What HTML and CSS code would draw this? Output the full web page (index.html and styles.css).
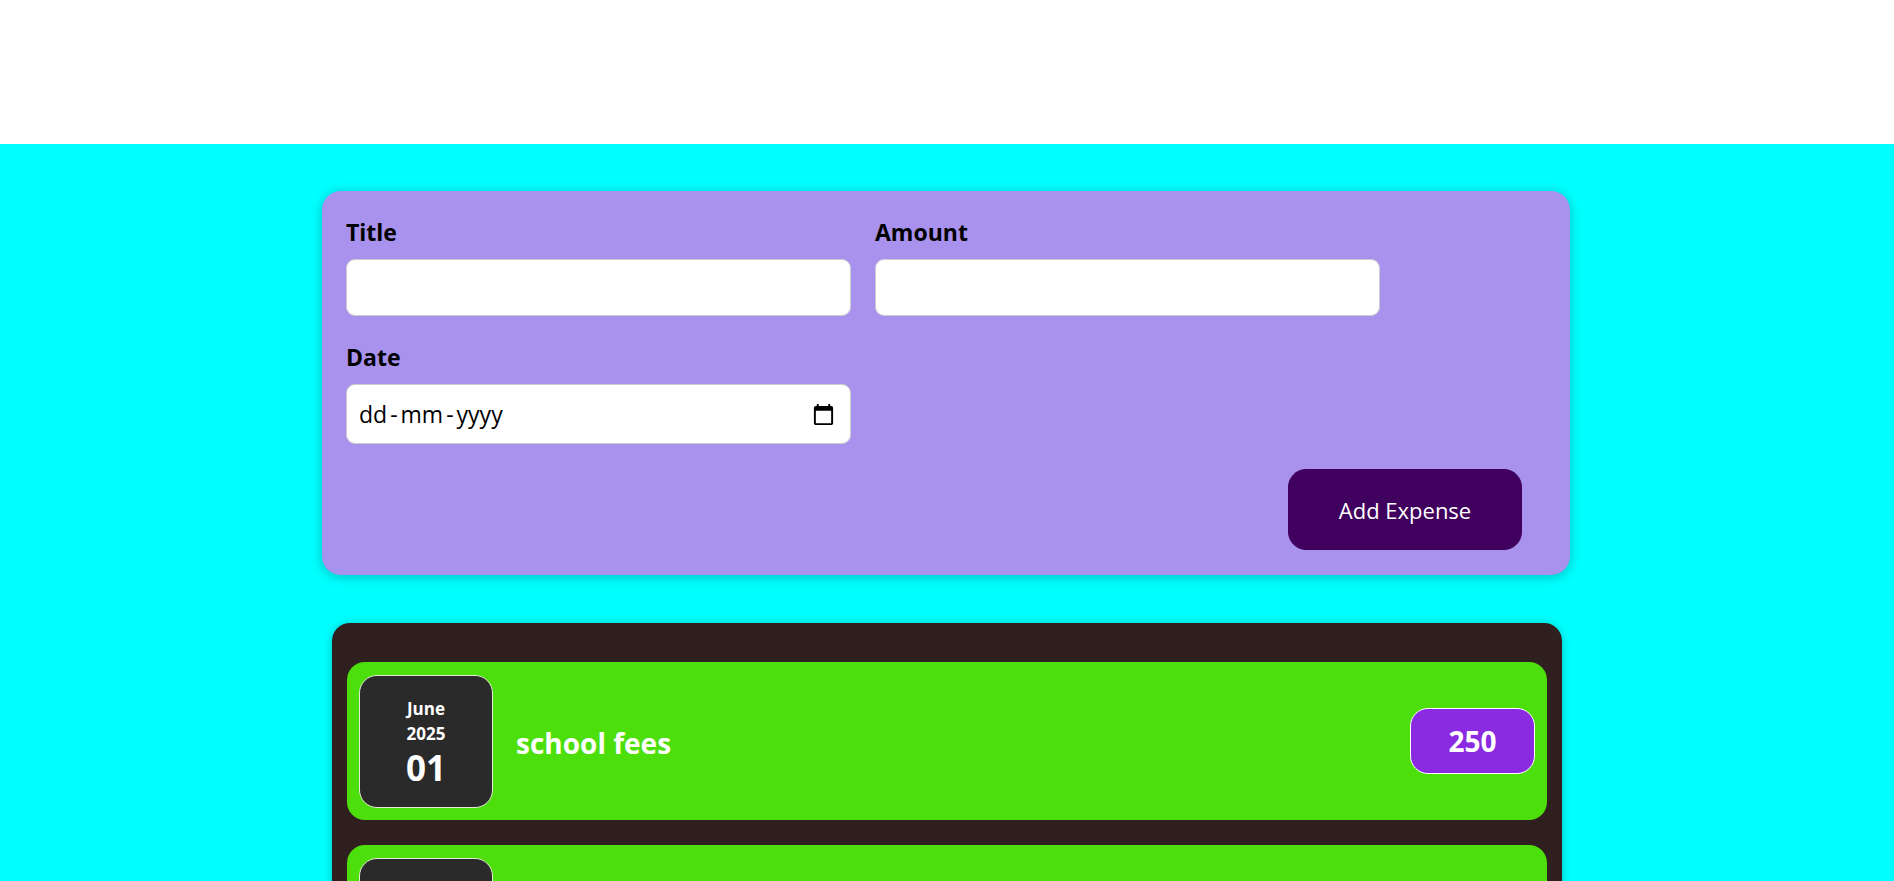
FILE: index.html
```html
<!DOCTYPE html>
<html lang="en">
<head>
<meta charset="utf-8">
<title>Expenses</title>
<link rel="stylesheet" href="styles.css">
</head>
<body>
<header class="top-bar"></header>
<main class="content">
  <form class="new-expense">
    <div class="controls">
      <div class="control">
        <label class="control-label">Title</label>
        <input class="text-input" type="text">
      </div>
      <div class="control">
        <label class="control-label">Amount</label>
        <input class="text-input" type="text">
      </div>
      <div class="control">
        <label class="control-label">Date</label>
        <div class="date-field">
          <span class="date-placeholder"><span>dd</span><span class="date-sep">-</span><span>mm</span><span class="date-sep">-</span><span>yyyy</span></span>
          <svg class="calendar-icon" viewBox="0 0 24 24" width="23" height="23"><path fill="#000" d="M20 3h-1V1h-2v2H7V1H5v2H4c-1.1 0-2 .9-2 2v16c0 1.1.9 2 2 2h16c1.1 0 2-.9 2-2V5c0-1.1-.9-2-2-2zm0 18H4V8h16v13z"/></svg>
        </div>
      </div>
    </div>
    <div class="actions">
      <button class="add-button" type="button">Add Expense</button>
    </div>
  </form>

  <section class="expenses">
    <div class="expense-item">
      <div class="expense-date">
        <div class="date-month">June</div>
        <div class="date-year">2025</div>
        <div class="date-day">01</div>
      </div>
      <h2 class="expense-title">school fees</h2>
      <div class="expense-price">250</div>
    </div>
    <div class="expense-item">
      <div class="expense-date">
        <div class="date-month">June</div>
        <div class="date-year">2025</div>
        <div class="date-day">02</div>
      </div>
      <h2 class="expense-title">books</h2>
      <div class="expense-price">120</div>
    </div>
  </section>
</main>
</body>
</html>
```

FILE: styles.css
```css
* {
  box-sizing: border-box;
}

html, body {
  margin: 0;
  padding: 0;
}

body {
  font-family: "Open Sans", "Noto Sans", "Liberation Sans", sans-serif;
  background: #ffffff;
}

.top-bar {
  height: 144px;
  background: #ffffff;
}

.content {
  background: #00ffff;
  min-height: 737px;
  padding: 47px 0 40px;
  display: flex;
  flex-direction: column;
  align-items: center;
}

.new-expense {
  width: 1248px;
  margin-right: 2px;
  background: #a892ee;
  padding: 25px 24px;
  border-radius: 19px;
  box-shadow: 0 2px 12px rgba(0, 0, 0, 0.25);
}

.controls {
  display: flex;
  flex-wrap: wrap;
  gap: 25px 24px;
  margin-bottom: 25px;
}

.control {
  width: 505px;
}

.control-label {
  display: block;
  font-weight: 700;
  font-size: 23px;
  line-height: 33px;
  margin-bottom: 10px;
  color: #000;
}

.text-input {
  display: block;
  width: 100%;
  height: 57px;
  border: 1px solid #cccccc;
  border-radius: 9px;
  background: #fff;
  font: inherit;
  padding: 0 12px;
}

.date-field {
  height: 60px;
  border: 1px solid #cccccc;
  border-radius: 9px;
  background: #fff;
  display: flex;
  align-items: center;
  justify-content: space-between;
  padding: 0 15px 0 12px;
}

.date-placeholder {
  font-size: 23px;
  color: #000;
  display: flex;
}

.date-sep {
  margin: 0 3px;
}

.calendar-icon {
  display: block;
}

.actions {
  display: flex;
  justify-content: flex-end;
}

.add-button {
  width: 234px;
  height: 81px;
  margin-right: 24px;
  border: 1px solid #40005d;
  background: #40005d;
  color: #ffffff;
  border-radius: 18px;
  font-family: inherit;
  font-size: 22px;
  cursor: pointer;
}

.expenses {
  margin-top: 48px;
  width: 1230px;
  background: #2f1f1f;
  border-radius: 18px;
  padding: 14px 15px;
  box-shadow: 0 1px 8px rgba(0, 0, 0, 0.25);
}

.expense-item {
  display: flex;
  align-items: center;
  height: 158px;
  margin: 25px 0;
  padding: 12px;
  background: #4ddf0c;
  border-radius: 18px;
}

.expense-date {
  width: 134px;
  height: 133px;
  flex-shrink: 0;
  background: #2a2a2a;
  border: 1px solid #e4ecd4;
  border-radius: 18px;
  color: #ffffff;
  display: flex;
  flex-direction: column;
  align-items: center;
  justify-content: center;
  font-weight: 700;
  padding-top: 3px;
}

.date-month,
.date-year {
  font-size: 17px;
  line-height: 25px;
}

.date-day {
  font-size: 35px;
  line-height: 44px;
}

.expense-title {
  flex: 1;
  margin: 3px 23px 0;
  color: #ffffff;
  font-size: 28px;
  font-weight: 700;
}

.expense-price {
  width: 125px;
  height: 66px;
  display: flex;
  align-items: center;
  justify-content: center;
  background: #8a2be2;
  border: 1px solid #ffffff;
  border-radius: 18px;
  color: #ffffff;
  font-size: 28px;
  font-weight: 700;
}
```
